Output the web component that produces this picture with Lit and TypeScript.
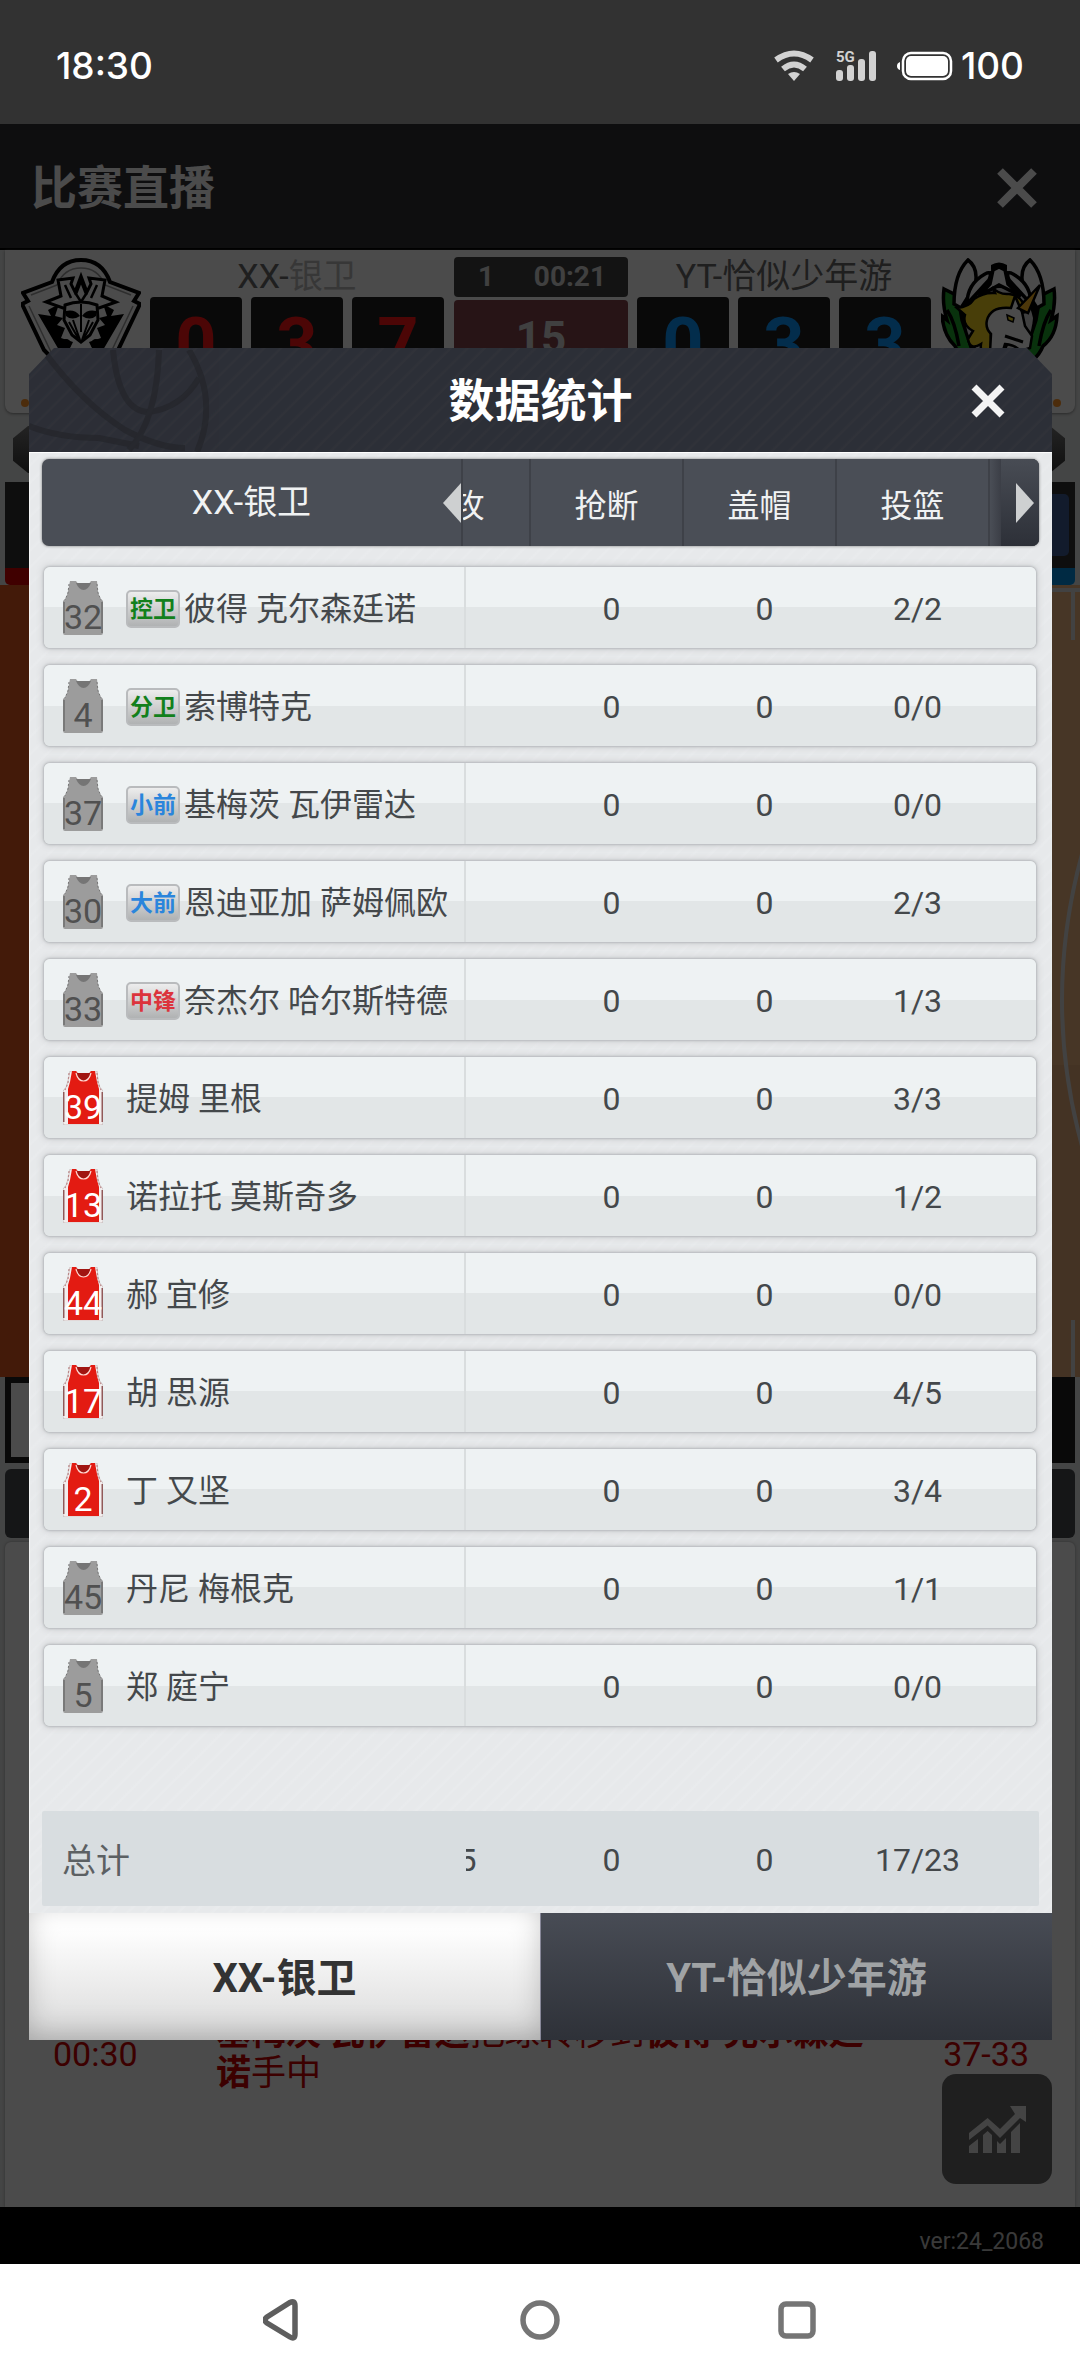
import { LitElement, html, svg, css, nothing } from "lit";
import { customElement, property, state } from "lit/decorators.js";
import { classMap } from "lit/directives/class-map.js";

interface Player {
  no: number;
  name: string;
  shots: string;
  pos?: string;
  tone?: "guard" | "forward" | "center";
  active?: boolean;
}

const PLAYERS: Player[] = [
  { no: 32, name: "彼得 克尔森廷诺", shots: "2/2", pos: "控卫", tone: "guard" },
  { no: 4, name: "索博特克", shots: "0/0", pos: "分卫", tone: "guard" },
  { no: 37, name: "基梅茨 瓦伊雷达", shots: "0/0", pos: "小前", tone: "forward" },
  { no: 30, name: "恩迪亚加 萨姆佩欧", shots: "2/3", pos: "大前", tone: "forward" },
  { no: 33, name: "奈杰尔 哈尔斯特德", shots: "1/3", pos: "中锋", tone: "center" },
  { no: 39, name: "提姆 里根", shots: "3/3", active: true },
  { no: 13, name: "诺拉托 莫斯奇多", shots: "1/2", active: true },
  { no: 44, name: "郝 宜修", shots: "0/0", active: true },
  { no: 17, name: "胡 思源", shots: "4/5", active: true },
  { no: 2, name: "丁 又坚", shots: "3/4", active: true },
  { no: 45, name: "丹尼 梅根克", shots: "1/1" },
  { no: 5, name: "郑 庭宁", shots: "0/0" },
];

const FONT = css`Roboto, "Noto Sans CJK SC", sans-serif`;

@customElement("player-jersey")
export class PlayerJersey extends LitElement {
  @property({ type: Number }) no = 0;
  @property({ type: Boolean }) active = false;

  static styles = css`
    :host { display: grid; width: 40px; height: 54px; }
    .shirt, .no { grid-area: 1 / 1; }
    .no {
      align-self: end;
      justify-self: center;
      font: 400 34px/36px ${FONT};
      color: #505050;
    }
    .no.active { color: #fff; }
  `;

  render() {
    const outline = "M7 0H13L16 4H25L28 0H34L35 10Q36 17 40 20V52Q40 54 38 54H2Q0 54 0 52V20Q4 17 5 10Z";
    return html`
      <svg class="shirt" viewBox="0 0 40 54" width="40" height="54" aria-hidden="true">
        ${this.active
          ? svg`
            <path d="${outline}" fill="#f3eeee" stroke="#b9a5a5" stroke-width=".6" />
            <path d="M9 0H13L16 4H25L28 0H32L34 11L36 18V53H5V18L7 11Z" fill="#e31b12" />
            <path d="M13 2H28Q26 10 20.500 10Q15 10 13 2Z" fill="#a01511" />
            <path d="M13 2Q15 10 20.500 10Q26 10 28 2" fill="none" stroke="#ffd9d3" stroke-width="1.200" />
            <path d="M.8 21V51M39.200 21V51" stroke="#7d3a3a" stroke-width="1.200" />
            <path d="M6 2L5 12L2 19M34 2L35 12L38 19" stroke="#b88" stroke-width="1.200" stroke-dasharray="2 2" fill="none" />`
          : svg`
            <path d="${outline}" fill="#9c9c9c" />
            <path d="M13 2H28Q25 9 20.500 9Q16 9 13 2Z" fill="#757575" />
            <path d="M1 21V52M39 21V52" stroke="#6c6c6c" stroke-width="1.400" />
            <path d="M6 3L5 12L2 19M34 3L35 12L38 19" stroke="#777" stroke-width="1" stroke-dasharray="2 2" fill="none" />`}
      </svg>
      <span class=${classMap({ no: true, active: this.active })}>${this.no}</span>
    `;
  }
}

@customElement("status-bar")
export class StatusBar extends LitElement {
  static styles = css`
    :host {
      display: flex;
      align-items: center;
      justify-content: space-between;
      height: 124px;
      padding: 8px 56px 0;
      box-sizing: border-box;
      background: #323232;
      color: #fff;
      font: 500 37px/44px Inter, sans-serif;
    }
    .right { display: flex; align-items: center; }
    .wifi { margin-right: 22px; }
    .signal { margin-right: 20px; }
    .battery { margin-right: 8px; }
    .gen { font: 700 15px Roboto, sans-serif; }
  `;

  render() {
    return html`
      <span>18:30</span>
      <div class="right">
        <svg class="wifi" width="40" height="32" viewBox="0 0 40 32" aria-hidden="true">
          <g fill="none" stroke="#d2d2d2" stroke-width="6">
            <path d="M2 10Q20 -3 38 10" />
            <path d="M9 19Q20 10 31 19" />
          </g>
          <path d="M14 24Q20 20 26 24L20 31Z" fill="#d2d2d2" />
        </svg>
        <svg class="signal" width="41" height="32" viewBox="0 0 41 32" aria-hidden="true">
          <text class="gen" x="0" y="12" fill="#d2d2d2">5G</text>
          <g fill="#d2d2d2">
            <rect x="0" y="20" width="7" height="11" rx="3" />
            <rect x="11" y="15" width="7" height="16" rx="3" />
            <rect x="22" y="9" width="7" height="22" rx="3" />
            <rect x="33" y="1" width="7" height="30" rx="3" />
          </g>
        </svg>
        <svg class="battery" width="56" height="30" viewBox="0 0 56 30" aria-hidden="true">
          <path d="M3 11Q0 12 0 15Q0 18 3 19Z" fill="#fff" />
          <rect x="6" y="2" width="48" height="26" rx="8" fill="none" stroke="#fff" stroke-width="2.500" />
          <rect x="9" y="5" width="42" height="20" rx="5" fill="#fff" />
        </svg>
        <span>100</span>
      </div>
    `;
  }
}

@customElement("nav-bar")
export class NavBar extends LitElement {
  static styles = css`
    :host {
      display: flex;
      justify-content: center;
      align-items: center;
      height: 111px;
      background: #fff;
    }
    .key {
      display: grid;
      place-items: center;
      width: 257px;
      height: 100%;
      padding: 0;
      border: 0;
      background: none;
    }
  `;

  render() {
    return html`
      <button class="key" aria-label="返回">
        <svg width="40" height="44" viewBox="0 0 40 44"><path d="M27 4.500Q32 2 32 8V36Q32 42 27 39L4 25Q0 22 4 19Z" fill="none" stroke="#5e5e5e" stroke-width="5.500" /></svg>
      </button>
      <button class="key" aria-label="主页">
        <svg width="40" height="40" viewBox="0 0 40 40"><circle cx="20" cy="20" r="17" fill="none" stroke="#757575" stroke-width="5.500" /></svg>
      </button>
      <button class="key" aria-label="最近">
        <svg width="38" height="38" viewBox="0 0 38 38"><rect x="3" y="3" width="32" height="32" rx="5" fill="none" stroke="#757575" stroke-width="5.500" /></svg>
      </button>
    `;
  }
}

@customElement("game-backdrop")
export class GameBackdrop extends LitElement {
  static styles = css`
    :host {
      display: flex;
      flex-direction: column;
      flex: 1;
      background: #e4e6e6;
      font-family: ${FONT};
      color: #666;
    }
    button { padding: 0; border: 0; background: none; display: grid; place-items: center; }
    .bar {
      display: flex;
      align-items: center;
      justify-content: space-between;
      height: 126px;
      padding: 4px 42px 0 31px;
      box-sizing: border-box;
      background: #2f2f35;
      border-bottom: 2px solid #000;
    }
    .title { margin: 0; font-size: 46px; line-height: 60px; font-weight: 700; color: #fafafa; }
    .score {
      display: flex;
      align-items: flex-start;
      flex-wrap: wrap;
      margin: 0 5px;
      padding: 0 14px 0 16px;
      background: #fafafa;
      border-radius: 0 0 8px 8px;
      box-shadow: 0 1px 3px #888;
    }
    .crest { width: 120px; height: 134px; margin-top: 8px; }
    .team { flex: 1; margin: 0 10px 0 9px; padding-top: 5px; }
    .name { text-align: center; font-size: 34px; line-height: 42px; color: #686868; }
    .pale { color: #b8b8b8; }
    .digits { display: grid; grid-template-columns: repeat(3, 1fr); gap: 9px; }
    .digit {
      background: #202020;
      border-radius: 4px;
      text-align: center;
      font-size: 72px;
      line-height: 95px;
      font-weight: 700;
    }
    .home .digit { color: #ff1414; }
    .away .digit { color: #0a96ff; }
    .clock {
      width: 174px;
      padding-top: 7px;
      display: grid;
      gap: 3px;
      color: #d8d8d8;
      font-weight: 700;
    }
    .period {
      display: flex;
      justify-content: space-between;
      padding: 0 22px 0 24px;
      background: #424242;
      border-radius: 4px;
      font-size: 28px;
      line-height: 40px;
    }
    .shot {
      height: 93px;
      background: #82434a;
      border-radius: 4px;
      text-align: center;
      font-size: 44px;
      line-height: 76px;
    }
    .dots { display: flex; justify-content: space-between; width: 100%; height: 20px; align-items: center; }
    .dot { width: 8px; height: 8px; border-radius: 50%; background: #ff9428; }
    .hex {
      height: 47px;
      margin: 13px 15px 9px 13px;
      background: linear-gradient(#777, #333);
      clip-path: polygon(0 26%, 15px 0, calc(100% - 15px) 0, 100% 26%, 100% 74%, calc(100% - 15px) 100%, 15px 100%, 0 74%);
    }
    .match { display: flex; justify-content: flex-end; margin: 0 5px; height: 86px; background: #303030; align-items: center; }
    .chip { width: 90px; height: 62px; margin-right: 6px; border-radius: 5px; background: #3e5c94; }
    .strip { height: 17px; margin: 0 5px; border-radius: 0 0 5px 5px; background: linear-gradient(90deg, #d60000 50%, #008ee0 50%); }
    .court { display: block; width: 100%; aspect-ratio: 1080 / 792; }
    .box { height: 86px; margin: 0 5px; box-sizing: border-box; border: 6px solid #202020; border-right-width: 36px; background: #fafafa; }
    .tabs { height: 69px; margin: 6px 5px 4px; border-radius: 6px; background: #484b4f; }
    .log {
      flex: 1;
      display: flex;
      flex-direction: column;
      justify-content: flex-end;
      margin: 0 5px;
      padding: 0 23px 113px 48px;
      background: #fafafa;
      border-radius: 6px 6px 0 0;
      box-shadow: 0 0 3px #999;
    }
    .event {
      display: grid;
      grid-template-columns: 163px 1fr auto;
      align-items: center;
      padding-right: 23px;
      font-size: 34px;
      line-height: 40px;
      color: #c80000;
    }
    .text { margin: 0; max-width: 660px; font-size: 35px; }
    .foot {
      height: 57px;
      padding: 6px 36px 0;
      box-sizing: border-box;
      background: #000;
      color: #c0c0c0;
      text-align: right;
      font-size: 23px;
      line-height: 57px;
    }
    .chart {
      align-self: flex-end;
      width: 110px;
      height: 110px;
      margin: -20px 0 -90px;
      background: #686868;
      border-radius: 14px;
    }
  `;

  private homeCrest() {
    return html`<svg class="crest" viewBox="0 0 120 134" aria-hidden="true">
      <path d="M31 24Q39 2 60 2Q81 2 89 24L118 35L113 43L119 46L97 92L60 130L23 92L1 46L7 43L2 35Z" fill="#fafafa" stroke="#000" stroke-width="4" />
      <path d="M36 27Q43 10 60 10Q77 10 84 27L110 37M36 27L10 37M8 48L30 94M112 48L90 94" fill="none" stroke="#999" stroke-width="1.500" />
      <path d="M17 56L30 58L27 52L38 46L34 58L42 60L36 67L44 70L40 80L52 84L47 94L60 90L73 94L68 84L80 80L76 70L84 67L78 60L86 58L82 46L93 52L90 58L103 56L82 92L60 110L38 92Z" fill="#000" />
      <path d="M37 22L52 20L50 26L54 34L60 18L66 34L70 26L68 20L84 22L81 38L95 44L78 50L42 50L25 44L40 38Z" fill="#fafafa" stroke="#000" stroke-width="3" />
      <path d="M55 36L60 23L65 36L60 44ZM44 27L50 40M76 27L70 40" fill="none" stroke="#000" stroke-width="2.500" />
      <path d="M44 47Q60 41 76 47L77 62L69 77L60 84L51 77L43 62Z" fill="#fafafa" stroke="#000" stroke-width="3" />
      <path d="M45 53Q54 51 59 58Q51 63 45 58ZM75 53Q66 51 61 58Q69 63 75 58Z" fill="#000" />
      <path d="M60 46V74M48 64L57 80M72 64L63 80M52 62L59 82M68 62L61 82" stroke="#000" stroke-width="2" fill="none" />
      <circle cx="45" cy="86" r="5" /><circle cx="75" cy="86" r="5" />
    </svg>`;
  }

  private awayCrest() {
    return html`<svg class="crest" viewBox="0 0 120 134" aria-hidden="true">
      <path d="M40 20Q58 2 76 20L96 48L100 92L58 118L16 92L20 48Z" fill="#000" />
      <g stroke="#000" stroke-width="3.500" fill="#20a82c">
        <path d="M3 31L17 38L21 62L31 92L49 112Q22 108 14 88Q3 78 1 58L6 62Q1 46 3 31Z" />
        <path d="M113 31L99 38L95 62L85 92L67 112Q94 108 102 88Q115 78 116 58L110 62Q115 46 113 31Z" />
        <path d="M6 52Q14 64 18 88M110 52Q102 64 98 88" fill="none" />
      </g>
      <path d="M58 30Q86 30 92 60Q90 92 58 108Q26 92 24 60Q30 30 58 30Z" fill="#d8d8d8" />
      <g fill="#fafafa" stroke="#000" stroke-width="3.500">
        <path d="M27 2Q38 10 34 28L20 50L13 46Q13 16 27 2Z" />
        <path d="M89 2Q78 10 82 28L96 50L103 46Q103 16 89 2Z" />
        <path d="M44 16Q52 12 48 22L26 46Q26 26 44 16Z" />
        <path d="M72 16Q64 12 68 22L90 46Q90 26 72 16Z" />
        <path d="M52 12L58 9L64 12L67 26L80 38L58 27L38 38L49 26Z" />
      </g>
      <path d="M50 7Q58 2 66 7V12Q58 8 50 12Z" fill="#000" />
      <path d="M16 50Q28 49 33 41Q43 34 54 35L51 29Q58 37 68 36Q82 37 85 54L64 58Q48 62 50 82Q49 94 55 104Q38 100 40 86Q29 93 27 81L32 73Q21 67 24 57Z" fill="#f0d020" stroke="#000" stroke-width="2.500" />
      <path d="M74 38L70 50Q50 48 46 62Q44 70 50 76L48 112H66Q59 98 64 86Q75 87 79 93L89 90L91 78L84 68L81 54Z" fill="#fafafa" stroke="#000" stroke-width="2.500" />
      <path d="M77 50L99 27L87 55Z" fill="#ffb824" stroke="#000" stroke-width="2.500" />
      <path d="M66 57L73 60L72 64L67 62Z" fill="#ffdf20" stroke="#000" stroke-width="1.500" />
      <path d="M64 78L82 84M66 86Q60 96 68 110" fill="none" stroke="#000" stroke-width="3" />
    </svg>`;
  }

  private digits(value: string) {
    return html`<div class="digits">${[...value].map((d) => html`<span class="digit">${d}</span>`)}</div>`;
  }

  render() {
    return html`
      <header class="bar">
        <h1 class="title">比赛直播</h1>
        <button aria-label="关闭直播">
          <svg width="42" height="42" viewBox="0 0 42 42"><path d="M4 4L38 38M38 4L4 38" stroke="#fafafa" stroke-width="8" /></svg>
        </button>
      </header>
      <section class="score">
        ${this.homeCrest()}
        <div class="team home">
          <div class="name">XX-<span class="pale">银卫</span></div>
          ${this.digits("037")}
        </div>
        <div class="clock">
          <div class="period"><span>1</span><span>00:21</span></div>
          <div class="shot">15</div>
        </div>
        <div class="team away">
          <div class="name">YT-恰似少年游</div>
          ${this.digits("033")}
        </div>
        ${this.awayCrest()}
        <div class="dots"><span class="dot"></span><span class="dot"></span></div>
      </section>
      <div class="hex"></div>
      <div class="match"><span class="chip"></span></div>
      <div class="strip"></div>
      <svg class="court" viewBox="0 0 1080 792" aria-hidden="true">
        <rect width="1080" height="792" fill="#e05721" />
        <rect x="540" width="540" height="792" fill="#edb47f" />
        <rect x="540" y="480" width="540" height="312" fill="#e4aa78" />
        <g fill="none" stroke="#ddd" stroke-width="4">
          <path d="M540 5H1080" />
          <path d="M1073 7V55M1073 792V735" />
          <path d="M1084 262Q1040 415 1084 568" />
        </g>
      </svg>
      <div class="box"></div>
      <div class="tabs"></div>
      <section class="log">
        <div class="event">
          <time>00:30</time>
          <p class="text"><b>基梅茨 瓦伊雷达</b>把球转移到<b>彼得 克尔森廷诺</b>手中</p>
          <span>37-33</span>
        </div>
        <button class="chart" aria-label="数据图表">
          <svg width="57" height="47" viewBox="0 0 57 47" fill="#fafafa" opacity=".85">
            <path d="M0 27L18.600 12L31 23L46 8L41 0H57V16L51 12L31 32L18.600 19.500L0 34Z" />
            <path d="M0 40L9 33V47H0ZM14 29L18.600 25L23 29V47H14ZM28 35L31 38L37 32V47H28ZM42 26L51 17V47H42Z" />
          </svg>
        </button>
      </section>
      <footer class="foot">ver:24_2068</footer>
    `;
  }
}

@customElement("stats-dialog")
export class StatsDialog extends LitElement {
  @state() private tab = 0;

  static styles = css`
    :host {
      display: block;
      flex: 1;
      font: 400 32px/40px ${FONT};
      color: #44484b;
    }
    button { padding: 0; border: 0; background: none; font: inherit; color: inherit; }
    .head {
      display: grid;
      grid-template-columns: 1fr auto 1fr;
      align-items: center;
      height: 104px;
      padding: 2px 46px 0;
      box-sizing: border-box;
      color: #fff;
      background: repeating-linear-gradient(135deg, #2c2f37 0 8px, #303239 10px 11px, #2c2f37 12px);
      clip-path: polygon(0 26px, 25px 0, calc(100% - 25px) 0, 100% 26px, 100% 100%, 0 100%);
    }
    .ball { align-self: end; margin-left: -46px; display: block; }
    .title { margin: 0; font-size: 46px; line-height: 60px; font-weight: 700; }
    .close { justify-self: end; display: grid; place-items: center; }
    .body {
      padding: 7px 13px;
      background: repeating-linear-gradient(135deg, #e7e9eb 0 8px, #e9ebed 10px 11px, #e7e9eb 12px);
      box-shadow: inset 0 1px 1px #fff, inset 1px 0 1px #f4f5f6;
    }
    .table, .rows { display: flex; flex-direction: column; }
    .rows { gap: 17px; margin: 21px 3px 85px 2px; }
    .heads, .row, .sum { display: grid; align-items: stretch; }
    th, td { padding: 0; font-weight: 400; box-sizing: border-box; display: flex; align-items: center; justify-content: center; }
    .heads {
      grid-template-columns: minmax(0, 1fr) 68px 153px 153px 153px 49px;
      height: 87px;
      overflow: hidden;
      border-radius: 7px;
      background: #4a4e56;
      color: #f0f2f3;
      box-shadow: 0 0 3px #777;
    }
    .heads th { border-right: 2px solid #3e4148; padding-top: 6px; }
    .heads .team {
      display: grid;
      grid-template-columns: 1fr auto 1fr;
      padding-top: 0;
      font-size: 34px;
    }
    .label { grid-column: 2; padding-bottom: 2px; }
    .prev { grid-column: 3; justify-self: end; display: grid; }
    .heads .more { border: 0; padding: 0 0 0 11px; background: linear-gradient(90deg, #4a4e56, #3a3d45 12px); }
    .next {
      flex: 1;
      align-self: stretch;
      display: grid;
      align-items: center;
      justify-content: end;
      padding-right: 5px;
      background: linear-gradient(#484c54, #2d3038);
    }
    .clip { overflow: hidden; justify-content: flex-end; }
    .shifted { flex: none; width: 153px; text-align: center; }
    .row {
      grid-template-columns: minmax(0, 1fr) 69px 153px 153px 153px 42px;
      height: 81px;
      border-radius: 6px;
      background: linear-gradient(#eef2f3 50%, #e2e6e7 50%);
      box-shadow: 0 0 2px 1px #b9bcbf, 0 0 6px 2px #d0d2d4;
    }
    .row td { padding-top: 2px; }
    .row .player {
      justify-content: flex-start;
      padding: 0 0 0 19px;
      border-right: 2px solid #d9ddde;
      white-space: nowrap;
    }
    .who { display: flex; align-items: center; gap: 4px; margin-left: 23px; padding-top: 2px; }
    .badge {
      width: 54px;
      height: 38px;
      box-sizing: border-box;
      border: 2px solid #b9bbbd;
      border-radius: 5px;
      background: linear-gradient(#ededed, #b0b2b3);
      text-align: center;
      font-size: 23px;
      line-height: 36px;
      font-weight: 700;
    }
    .guard { color: #12801c; }
    .forward { color: #2a85dc; }
    .center { color: #dc343c; }
    .sum {
      grid-template-columns: minmax(0, 1fr) 69px 153px 153px 153px 45px;
      height: 95px;
      background: #d8dde0;
      border-radius: 2px;
    }
    .sum td { padding-top: 2px; }
    .sum .total { justify-content: flex-start; padding: 4px 0 0 20px; font-size: 34px; color: #5c6063; }
    .tabs { display: grid; grid-template-columns: 1fr 1fr; height: 127px; gap: 1px; background: #889; }
    .tabs .tab {
      padding-top: 4px;
      background: linear-gradient(#484c55, #2e3138);
      color: #a0a3a5;
      font-size: 40px;
      font-weight: 700;
    }
    .tabs .tab.on {
      background: linear-gradient(#fff 10%, #dadada);
      color: #333;
      box-shadow: inset 0 -8px 30px -4px rgba(0, 0, 0, .25);
    }
  `;

  private row(p: Player) {
    return html`<tr class="row">
      <td class="player">
        <player-jersey .no=${p.no} .active=${!!p.active}></player-jersey>
        <span class="who">
          ${p.pos ? html`<span class="badge ${p.tone ?? ""}">${p.pos}</span>` : nothing}
          <span>${p.name}</span>
        </span>
      </td>
      <td></td>
      <td>0</td>
      <td>0</td>
      <td>${p.shots}</td>
    </tr>`;
  }

  render() {
    const teams = ["XX-银卫", "YT-恰似少年游"];
    return html`
      <header class="head">
        <svg class="ball" width="180" height="102" viewBox="0 0 180 102" fill="none" stroke="#24262b" stroke-width="6" opacity=".75" aria-hidden="true">
          <path d="M14 0Q52 52 96 80Q130 98 156 98" />
          <path d="M0 76Q30 88 70 88L110 96" />
          <path d="M84 0Q90 62 120 62Q152 58 170 28" />
          <path d="M130 0Q128 70 100 100" />
          <path d="M160 0Q190 50 168 102" />
        </svg>
        <h2 class="title">数据统计</h2>
        <button class="close" aria-label="关闭">
          <svg width="36" height="36" viewBox="0 0 36 36"><path d="M4 4L32 32M32 4L4 32" stroke="#f4f4f4" stroke-width="7" /></svg>
        </button>
      </header>
      <div class="body">
        <table class="table">
          <thead>
            <tr class="heads">
              <th class="team">
                <span class="label">XX-银卫</span>
                <button class="prev" aria-label="向左">
                  <svg width="18" height="40" viewBox="0 0 18 40"><path d="M18 0V40L0 20Z" fill="#ced0d1" /></svg>
                </button>
              </th>
              <th class="clip"><span class="shifted">助攻</span></th>
              <th>抢断</th>
              <th>盖帽</th>
              <th>投篮</th>
              <th class="more">
                <button class="next" aria-label="向右">
                  <svg width="18" height="40" viewBox="0 0 18 40"><path d="M0 0V40L18 20Z" fill="#ced0d1" /></svg>
                </button>
              </th>
            </tr>
          </thead>
          <tbody class="rows">${PLAYERS.map((p) => this.row(p))}</tbody>
          <tfoot>
            <tr class="sum">
              <td class="total">总计</td>
              <td class="clip"><span class="shifted">15</span></td>
              <td>0</td>
              <td>0</td>
              <td>17/23</td>
            </tr>
          </tfoot>
        </table>
      </div>
      <div class="tabs">
        ${teams.map(
          (t, i) => html`<button
            class=${classMap({ tab: true, on: this.tab === i })}
            @click=${() => (this.tab = i)}
          >${t}</button>`,
        )}
      </div>
    `;
  }
}

@customElement("app-root")
export class AppRoot extends LitElement {
  static styles = css`
    :host { display: flex; flex-direction: column; min-height: 100vh; }
    .game { position: relative; flex: 1; display: flex; flex-direction: column; }
    .shade {
      position: absolute;
      inset: 0;
      display: flex;
      align-items: center;
      padding: 0 28px 0 29px;
      background: rgba(0, 0, 0, .7);
    }
  `;

  render() {
    return html`
      <status-bar></status-bar>
      <main class="game">
        <game-backdrop></game-backdrop>
        <div class="shade"><stats-dialog></stats-dialog></div>
      </main>
      <nav-bar></nav-bar>
    `;
  }
}
